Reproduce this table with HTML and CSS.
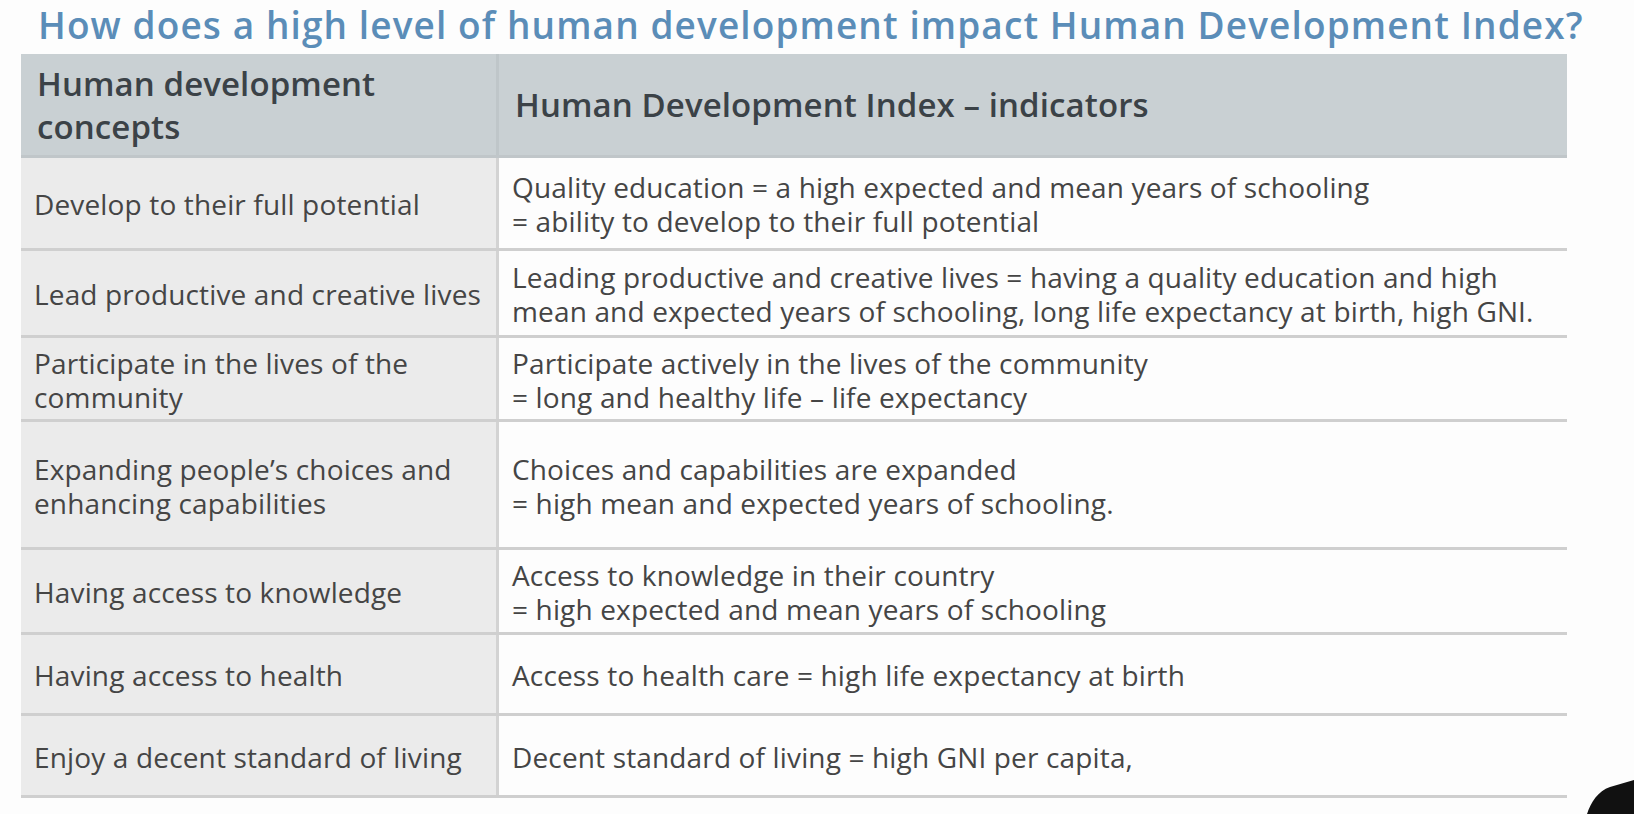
FILE: index.html
```html
<!DOCTYPE html>
<html lang="en">
<head>
<meta charset="utf-8">
<title>Human Development Index</title>
<link rel="stylesheet" href="styles.css">
</head>
<body>
<div class="page">
  <h1 class="title">How does a high level of human development impact Human Development Index?</h1>
  <div class="table">
    <div class="row head">
      <div class="cell left">Human development<br>concepts</div>
      <div class="cell right">Human Development Index – indicators</div>
    </div>
    <div class="row r1">
      <div class="cell left">Develop to their full potential</div>
      <div class="cell right">Quality education = a high expected and mean years of schooling<br>= ability to develop to their full potential</div>
    </div>
    <div class="row r2">
      <div class="cell left">Lead productive and creative lives</div>
      <div class="cell right">Leading productive and creative lives = having a quality education and high<br>mean and expected years of schooling, long life expectancy at birth, high GNI.</div>
    </div>
    <div class="row r3">
      <div class="cell left">Participate in the lives of the<br>community</div>
      <div class="cell right">Participate actively in the lives of the community<br>= long and healthy life – life expectancy</div>
    </div>
    <div class="row r4">
      <div class="cell left">Expanding people’s choices and<br>enhancing capabilities</div>
      <div class="cell right">Choices and capabilities are expanded<br>= high mean and expected years of schooling.</div>
    </div>
    <div class="row r5">
      <div class="cell left">Having access to knowledge</div>
      <div class="cell right">Access to knowledge in their country<br>= high expected and mean years of schooling</div>
    </div>
    <div class="row r6">
      <div class="cell left">Having access to health</div>
      <div class="cell right">Access to health care = high life expectancy at birth</div>
    </div>
    <div class="row r7">
      <div class="cell left">Enjoy a decent standard of living</div>
      <div class="cell right">Decent standard of living = high GNI per capita,</div>
    </div>
  </div>
  <svg class="blob" width="50" height="36" viewBox="0 0 50 36" aria-hidden="true">
    <path d="M3 36 C7 24 14 13 26 9 L50 2 L50 36 Z" fill="#111"/>
  </svg>
</div>
</body>
</html>
```
FILE: styles.css
```css
html, body {
  margin: 0;
  padding: 0;
  background: #fdfdfd;
}
.page {
  position: relative;
  width: 1634px;
  height: 814px;
  overflow: hidden;
  font-family: "Open Sans", "Noto Sans", sans-serif;
}
.title {
  margin: 0;
  padding: 0 0 0 38px;
  height: 54px;
  font-size: 37px;
  letter-spacing: 1.1px;
  line-height: 49px;
  font-weight: 600;
  color: #5b8db8;
  white-space: nowrap;
}
.table {
  margin-left: 21px;
  width: 1546px;
  display: flex;
  flex-direction: column;
}
.row {
  display: flex;
  border-bottom: 3px solid #cfcfcf;
  box-sizing: border-box;
}
.cell {
  display: flex;
  align-items: center;
  box-sizing: border-box;
  padding-left: 13px;
  padding-top: 2px;
  font-size: 28px;
  letter-spacing: 0.15px;
  line-height: 34px;
  color: #454545;
  font-weight: 400;
  white-space: nowrap;
}
.left {
  width: 478px;
  background: #ebebeb;
  border-right: 3px solid #d3d3d3;
}
.right {
  flex: 1;
  background: #fdfdfd;
  padding-left: 13px;
}
.head {
  height: 104px;
  border-bottom: 3px solid #c0c6c9;
}
.head .cell {
  background: #c9d0d3;
  color: #3b4247;
  font-weight: 600;
  font-size: 33px;
  letter-spacing: 0.1px;
  line-height: 43px;
  padding-left: 16px;
  padding-top: 0;
}
.head .left {
  border-right-color: #bfc6c9;
}
.head .right {
  padding-left: 16px;
}
.r1 { height: 93px; }
.r2 { height: 87px; }
.r3 { height: 84px; }
.r4 { height: 128px; }
.r5 { height: 85px; }
.r6 { height: 81px; }
.r7 { height: 82px; }
.blob {
  position: absolute;
  right: 0;
  bottom: 0;
}
```
